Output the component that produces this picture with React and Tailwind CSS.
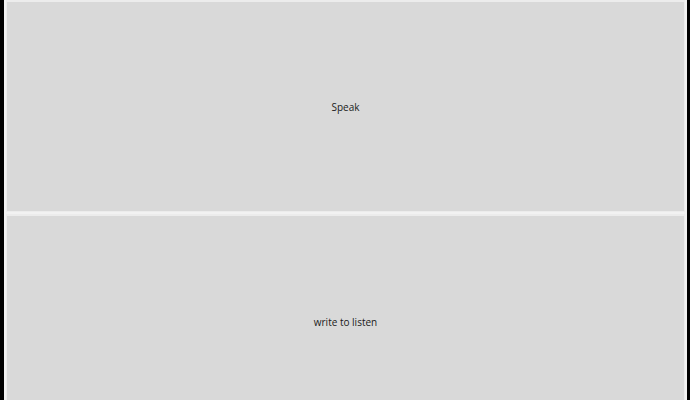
import React from 'react';

const Pad = ({ label, className = '' }) => (
  <button
    className={`flex w-full shrink-0 items-center justify-center border border-[#ececec] border-t-2 bg-[#d9d9d9] pt-[1px] text-[10px] text-[#1a1a1a] ${className}`}
    style={{ fontFamily: '"Open Sans", sans-serif' }}
  >
    {label}
  </button>
);

export default function App() {
  return (
    <div className="flex h-[400px] w-[690px] overflow-hidden bg-black pl-[4px] pr-[3px]">
      <div className="flex flex-1 flex-col gap-[2px] overflow-hidden bg-[#f2f2f2] pl-[2px] pr-[2px]">
        <Pad label="Speak" className="h-[212px]" />
        <Pad label="write to listen" className="h-[214px]" />
      </div>
    </div>
  );
}
